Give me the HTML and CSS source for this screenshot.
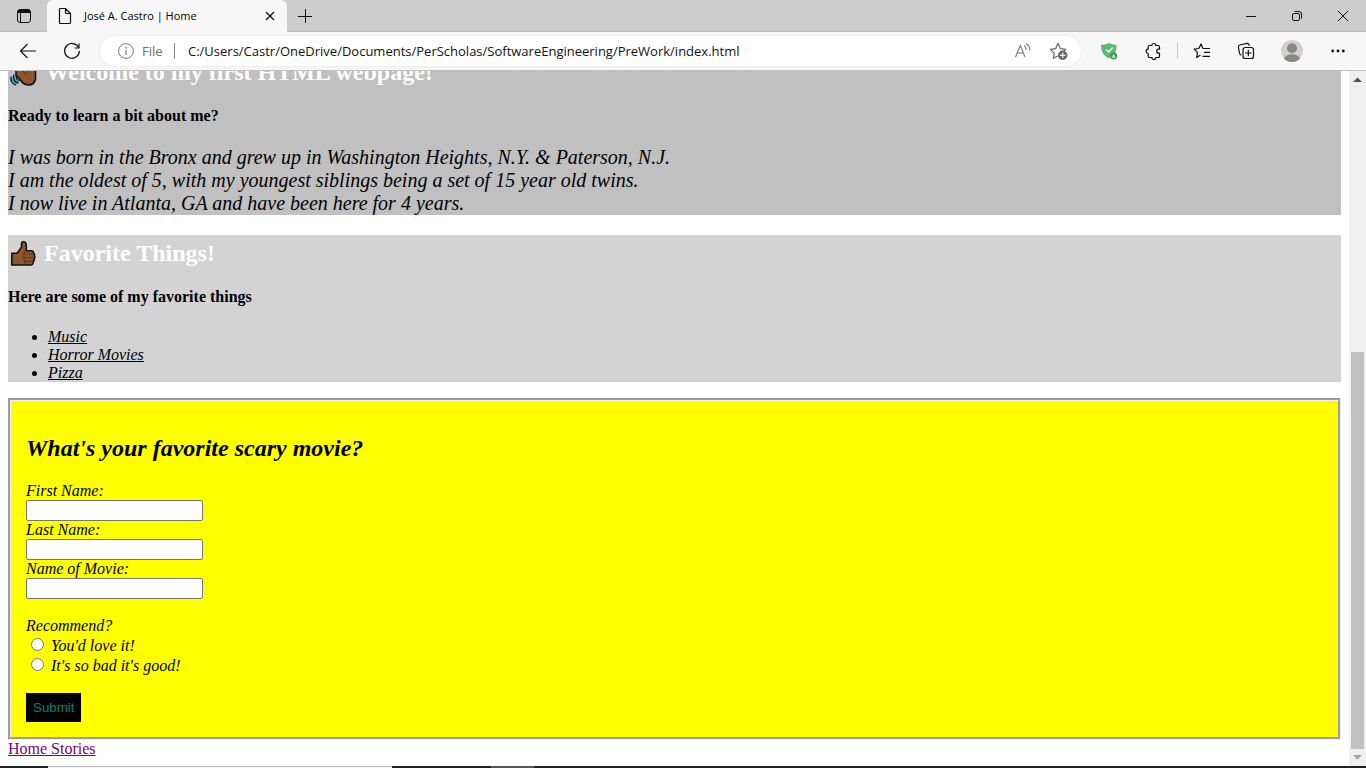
FILE: index.html
```html
<!DOCTYPE html>
<html lang="en">
<head>
<meta charset="utf-8">
<title>José A. Castro | Home</title>
<link rel="stylesheet" href="styles.css">
</head>
<body>
<div class="browser">
  <header class="titlebar">
    <button class="tab-actions" aria-label="Tab actions">
      <svg width="16" height="16" viewBox="0 0 16 16"><rect x="1.5" y="1.5" width="13" height="13" rx="2.5" fill="none" stroke="#111"/><path d="M1.5 5V4a2.500 2.500 0 0 1 2.500-2.500h8A2.500 2.500 0 0 1 14.500 4v1z" fill="#111"/><path d="M4.500 4.500v9.500" stroke="#111"/></svg>
    </button>
    <div class="tab">
      <svg width="16" height="18" viewBox="0 0 16 18" fill="none" stroke="#111" stroke-width="1.200"><path d="M3.500 1.500h5L13.500 6.500v9a1 1 0 0 1-1 1h-9a1 1 0 0 1-1-1v-13a1 1 0 0 1 1-1zM8.500 1.500v4a1 1 0 0 0 1 1h4"/></svg>
      <span class="tab-title">José A. Castro | Home</span>
      <button class="tab-close" aria-label="Close tab"><svg width="10" height="10" viewBox="0 0 10 10"><path d="M1 1l8 8M9 1l-8 8" stroke="#111" stroke-width="1.400"/></svg></button>
    </div>
    <button class="new-tab" aria-label="New tab"><svg width="16" height="16" viewBox="0 0 16 16"><path d="M1 8.500h14M8.500 1v14" stroke="#111"/></svg></button>
    <div class="window-controls">
      <button aria-label="Minimize"><svg width="12" height="12" viewBox="0 0 12 12"><path d="M1 6.500h10" stroke="#111"/></svg></button>
      <button aria-label="Restore"><svg width="12" height="12" viewBox="0 0 12 12" fill="none" stroke="#111"><rect x="1.500" y="3.500" width="7" height="7" rx="1.500"/><path d="M3.500 1.500H8A2.500 2.500 0 0 1 10.500 4v4.500"/></svg></button>
      <button aria-label="Close"><svg width="12" height="12" viewBox="0 0 12 12"><path d="M1 1l10 10M11 1L1 11" stroke="#111"/></svg></button>
    </div>
  </header>
  <nav class="toolbar" aria-label="Browser toolbar">
    <button class="tool" aria-label="Back"><svg width="18" height="16" viewBox="0 0 18 16"><path d="M17 8H1.500M8.500 1L1.500 8l7 7" fill="none" stroke="#111" stroke-width="1.200"/></svg></button>
    <button class="tool" aria-label="Refresh"><svg width="18" height="18" viewBox="0 0 18 18" fill="none" stroke="#111" stroke-width="1.200"><path d="M15.700 5.700A7.400 7.400 0 1 0 16.400 9"/><path d="M16 1.500v4.500h-4.500"/></svg></button>
    <div class="address">
      <svg width="16" height="16" viewBox="0 0 16 16"><circle cx="8" cy="8" r="7.400" fill="none" stroke="#777"/><path d="M8 7v5" stroke="#777" stroke-width="1.200"/><circle cx="8" cy="4.800" r=".9" fill="#777"/></svg>
      <label class="scheme" for="url">File</label>
      <input class="url" id="url" type="text" value="C:/Users/Castr/OneDrive/Documents/PerScholas/SoftwareEngineering/PreWork/index.html">
      <button class="address-tool" aria-label="Read aloud"><svg width="18" height="18" viewBox="0 0 18 18" fill="none" stroke="#777" stroke-width="1.100"><path d="M2.500 15L7.300 3.500 12 15M4.200 11h6.200M11 3.200q2.200 1.500 2 4.800M13.200 1.500q4 2.800 3.400 7"/></svg></button>
      <button class="address-tool" aria-label="Add to favorites"><svg width="20" height="20" viewBox="0 0 20 20"><path d="M8.800 15l-4.500 2.300.9-5.200L1.400 8.400l5.300-.8L9 2.300l2.400 5.300 5.300.8-2 2" fill="none" stroke="#666" stroke-width="1.200" stroke-linejoin="round"/><circle cx="13.700" cy="14.300" r="4.700" fill="#666"/><path d="M13.700 11.600v5.400M11 14.300h5.400" stroke="#fff" stroke-width="1.200"/></svg></button>
    </div>
    <button class="tool" aria-label="Security extension"><svg width="18" height="18" viewBox="0 0 18 18"><path d="M1 3q5-.3 8-2 3 1.700 7.500 2 .5 10-7.500 13.500Q.8 13 1 3z" fill="#5bb974"/><path d="M6 7.500l2.500 2.400 4.200-4.400" fill="none" stroke="#fff" stroke-width="1.400"/><circle cx="13.700" cy="14" r="3.600" fill="#3f9c58"/><path d="M12.200 15.200l1.500-2.500 1.500 2.500z" fill="none" stroke="#d4f0db"/></svg></button>
    <button class="tool" aria-label="Extensions"><svg width="18" height="18" viewBox="0 0 18 18" fill="none" stroke="#111" stroke-width="1.200" stroke-linejoin="round"><path d="M5.500 3.500h2.300a2 2 0 0 1 4 0h2.400a1.300 1.300 0 0 1 1.300 1.300v2.400h-.8a2 2 0 0 0 0 4h.8v3a1.300 1.300 0 0 1-1.300 1.300h-2.400a2 2 0 0 1-4 0H5.500a1.300 1.300 0 0 1-1.300-1.300v-2.700a2.100 2.100 0 0 1 0-4.300V4.800a1.300 1.300 0 0 1 1.300-1.300z"/></svg></button>
    <span class="divider"></span>
    <button class="tool" aria-label="Favorites"><svg width="18" height="18" viewBox="0 0 18 18" fill="none" stroke="#111" stroke-width="1.200" stroke-linejoin="round"><path d="M7.500 13l-3.800 2.400.8-4.800L1.200 7.200l4.600-.7L8 2l2 4.500h7M11 10.300h6M9.500 14.300H17"/></svg></button>
    <button class="tool" aria-label="Collections"><svg width="18" height="18" viewBox="0 0 18 18" fill="none" stroke="#111" stroke-width="1.200"><path d="M4.300 13.200Q2.800 12.700 2.500 11L1.400 5.200Q1.200 3.500 2.800 3L10 1.400q1.500-.2 2 1.100l.4 1.200"/><rect x="6" y="5.500" width="10.500" height="11" rx="2.300"/><path d="M11.300 7.800v6.400M8 11h6.500"/></svg></button>
    <button class="tool profile" aria-label="Profile"><svg width="22" height="22" viewBox="0 0 22 22"><clipPath id="disc"><circle cx="11" cy="11" r="11"/></clipPath><g clip-path="url(#disc)"><rect width="22" height="22" fill="#d3d1cd"/><circle cx="11" cy="8.300" r="5" fill="#8a8683"/><ellipse cx="11" cy="19" rx="8" ry="4.700" fill="#8a8683"/></g></svg></button>
    <button class="tool" aria-label="Settings and more"><svg width="14" height="4" viewBox="0 0 14 4" fill="#111"><circle cx="1.700" cy="2" r="1.400"/><circle cx="7" cy="2" r="1.400"/><circle cx="12.300" cy="2" r="1.400"/></svg></button>
  </nav>
  <div class="viewport">
    <main class="page">
      <section class="about">
        <h2><svg class="emoji wave" width="32" height="28" viewBox="0 0 32 28"><path d="M4.500 18q-1 5 4 7M7 16q-1 5 4 7" fill="none" stroke="#111" stroke-width="4"/><path d="M4.500 18q-1 5 4 7M7 16q-1 5 4 7" fill="none" stroke="#40b8dc" stroke-width="1.600"/><path d="M8 5L21 2l6.500 5v13q-1 6-7 6-5 0-8-5l-4.500-5z" fill="#8e562e" stroke="#111" stroke-width="1.600"/><path d="M12 8l6 8M15 7l5 7" stroke="#5b3519" fill="none"/></svg> Welcome to my first HTML webpage!</h2>
        <h4>Ready to learn a bit about me?</h4>
        <p>I was born in the Bronx and grew up in Washington Heights, N.Y. &amp; Paterson, N.J.<br>I am the oldest of 5, with my youngest siblings being a set of 15 year old twins.<br>I now live in Atlanta, GA and have been here for 4 years.</p>
      </section>
      <section class="favorites">
        <h2><svg class="emoji" width="30" height="28" viewBox="0 0 30 28"><path d="M3.800 13.300H9l4.500-6V3.500q0-1.700 1.800-1.700 3 0 3 3.700v5.200h5q2 0 2 1.800 1.500 1 1 3 1 1.500 0 3 .3 2-1 3-.2 3.500-2.500 3.500h-19z" fill="#8e562e" stroke="#111" stroke-width="1.600" stroke-linejoin="round"/><path d="M17.500 10.700q-2 .8-1.500 3.300M16 14h9.500M16.500 17.700h9M17 21.300h7.500M16 14q-1 6 1.500 10" fill="none" stroke="#5b3519"/></svg> Favorite Things!</h2>
        <h4>Here are some of my favorite things</h4>
        <ul>
          <li><a href="#music">Music</a></li>
          <li><a href="#movies">Horror Movies</a></li>
          <li><a href="#pizza">Pizza</a></li>
        </ul>
      </section>
      <form class="survey">
        <h2>What's your favorite scary movie?</h2>
        <div class="field"><label for="first">First Name:</label><input id="first" type="text"></div>
        <div class="field"><label for="last">Last Name:</label><input id="last" type="text"></div>
        <div class="field"><label for="movie">Name of Movie:</label><input id="movie" type="text"></div>
        <fieldset>
          <legend>Recommend?</legend>
          <div class="choice"><input id="love" type="radio" name="recommend"><label for="love">You'd love it!</label></div>
          <div class="choice"><input id="bad" type="radio" name="recommend"><label for="bad">It's so bad it's good!</label></div>
        </fieldset>
        <button class="submit" type="submit">Submit</button>
      </form>
      <nav class="links"><a href="#home">Home </a><a href="#stories">Stories</a></nav>
    </main>
    <div class="scrollbar">
      <svg width="17" height="17" viewBox="0 0 17 17"><path d="M4 11h9L8.500 6.500z" fill="#505050"/></svg>
      <div class="track"><div class="thumb"></div></div>
      <svg width="17" height="17" viewBox="0 0 17 17"><path d="M4 6h9l-4.500 4.500z" fill="#a3a3a3"/></svg>
    </div>
  </div>
  <div class="taskbar"><span class="search"></span><span class="active-app"></span></div>
</div>
</body>
</html>
```
FILE: styles.css
```css
* { box-sizing: border-box; }

body {
  margin: 0;
  background: #fff;
  color: #000;
  font: 16px/18px "Liberation Serif", "Times New Roman", serif;
}

svg { display: block; flex: none; }

.browser {
  display: flex;
  flex-direction: column;
  height: 100vh;
  overflow: hidden;
}

.titlebar button, .toolbar button {
  display: flex;
  align-items: center;
  justify-content: center;
  padding: 0;
  border: 0;
  background: none;
}

.titlebar {
  display: flex;
  flex: none;
  height: 32px;
  background: #cdcdcd;
  box-shadow: inset 0 -1px #c0c0c0;
  font: 11px/16px "Open Sans", "Segoe UI", sans-serif;
}

.titlebar .tab-actions { width: 47px; }

.tab {
  display: flex;
  align-items: center;
  width: 240px;
  padding: 0 10px;
  border-radius: 6px 6px 0 0;
  background: #f7f7f7;
}

.tab-title {
  flex: 1;
  margin-left: 11px;
  white-space: nowrap;
}

.titlebar .tab-close { width: 14px; height: 16px; }
.titlebar .new-tab { width: 36px; }
.window-controls { display: flex; margin-left: auto; }
.window-controls button { width: 46px; }

.toolbar {
  display: flex;
  flex: none;
  align-items: center;
  height: 39px;
  padding: 0 6px;
  border-bottom: 1px solid #c0c0c0;
  background: #f7f7f7;
}

.toolbar .tool { width: 44px; height: 30px; }
.toolbar .profile { width: 48px; }

.divider {
  width: 1px;
  height: 16px;
  margin: 0 2px;
  background: #c8c8c8;
}

.address {
  display: flex;
  flex: 1;
  align-items: center;
  height: 30px;
  margin: 0 6px;
  padding: 0 4px 0 18px;
  border-radius: 15px;
  background: #fff;
  box-shadow: 0 0 3px #e0e0e0;
  font: 13px/16px "Open Sans", "Segoe UI", sans-serif;
}

.scheme {
  width: 33px;
  margin-left: 8px;
  border-right: 1px solid #8a8a8a;
  color: #707070;
}

.url {
  flex: 1;
  min-width: 0;
  padding: 0 0 0 13px;
  border: 0;
  background: none;
  color: #111;
  font: inherit;
}

.address .address-tool { width: 37px; height: 30px; }

.viewport {
  display: flex;
  flex: 1;
  min-height: 0;
}

/* The page is shown scrolled to its end. */
.page {
  display: flex;
  flex: 1;
  flex-direction: column;
  justify-content: flex-end;
  min-width: 0;
  padding: 0 8px 8px;
  overflow: hidden;
}

h2, h4, p, ul { margin: 0; }
h2 { font-size: 24px; line-height: 27px; }

.about, .favorites { flex: none; }
.about { margin-bottom: 20px; background: #c0c0c0; }
.favorites { margin-bottom: 16px; background: #d3d3d3; }

.about h2, .favorites h2 {
  color: #fff;
  line-height: 32px;
  padding-top: 2px;
  height: 32px;
}

.emoji { display: inline-block; vertical-align: -7px; }

h4 { margin: 21px 0; font-size: 16px; }

.about p {
  font-size: 20px;
  font-style: italic;
  line-height: 23px;
}

ul { padding: 1px 0 0 40px; }
ul a { color: #000; font-style: italic; }

.survey {
  flex: none;
  padding: 15px;
  border: 3px groove #f0f0f0;
  background: #ff0;
  font-style: italic;
}

.survey h2 { margin: 19px 0 20px; }
.field label { display: block; }

.field input {
  display: block;
  width: 177px;
  height: 21px;
  padding: 1px 2px;
  border: 1px solid #767676;
  border-radius: 2px;
  background: #fff;
}

fieldset {
  min-width: 0;
  margin: 18px 0;
  padding: 0;
  border: 0;
}

legend { padding: 0; }

.choice {
  display: flex;
  gap: 7px;
  align-items: center;
  height: 20px;
}

.choice input {
  width: 13px;
  height: 13px;
  margin: 0 0 2px 5px;
}

.choice label { padding-top: 2px; }

.submit {
  display: block;
  padding: 7px;
  border: 0;
  background: #000;
  color: #008080;
  font-family: "Liberation Sans", Arial, sans-serif;
  line-height: 15px;
}

.links { flex: none; }
.links a { color: #800080; white-space: pre; }

.scrollbar {
  display: flex;
  flex: none;
  flex-direction: column;
  width: 17px;
  background: #f0f0f0;
}

.track {
  display: flex;
  flex: 1;
  flex-direction: column;
  justify-content: flex-end;
  padding: 0 2px;
}

.thumb { height: 60%; background: #c1c1c1; }

.taskbar {
  display: flex;
  flex: none;
  height: 2px;
  padding-left: 48px;
  background: #222;
}

.search {
  width: 344px;
  border-top: 1px solid #bbb;
  background: #f2f2f2;
}

.active-app { width: 43px; margin-left: 99px; background: #555; }
```
